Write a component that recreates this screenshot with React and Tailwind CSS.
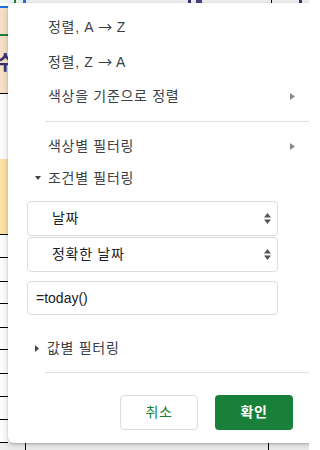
import React from 'react'

const font = { fontFamily: '"Liberation Sans", "Noto Sans CJK KR", sans-serif' }

function RightArrow() {
  return (
    <svg width="5" height="7" viewBox="0 0 5 7" className="shrink-0">
      <path d="M0 0 L5 3.5 L0 7 Z" fill="#8a8a8a" />
    </svg>
  )
}

function Caret({ open }) {
  return open ? (
    <svg width="6" height="4" viewBox="0 0 6 4" className="shrink-0">
      <path d="M0 0 L6 0 L3 4 Z" fill="#444" />
    </svg>
  ) : (
    <svg width="4" height="7" viewBox="0 0 4 7" className="shrink-0">
      <path d="M0 0 L4 3.5 L0 7 Z" fill="#444" />
    </svg>
  )
}

function UpDown() {
  return (
    <svg width="7" height="11" viewBox="0 0 7 11" className="shrink-0">
      <path d="M0 4.5 L3.5 0 L7 4.5 Z" fill="#555" />
      <path d="M0 6.5 L7 6.5 L3.5 11 Z" fill="#555" />
    </svg>
  )
}

function MenuItem({ label, arrow }) {
  return (
    <div className="h-[35px] flex items-center pl-[40px] pr-[13px] text-[14px] tracking-[0.7px] text-[#3c4043]">
      <span className="flex-1">{label}</span>
      {arrow && <RightArrow />}
    </div>
  )
}

function SortLabel({ from, to }) {
  return (
    <>
      정렬, {from} <span className="font-['Noto_Sans_CJK_KR',sans-serif] tracking-normal">→</span> {to}
    </>
  )
}

function SelectBox({ label, className = '' }) {
  return (
    <div className={`h-[35px] w-[251px] ml-[19px] flex items-center pl-[24px] pr-[6px] border border-[#dadce0] rounded-[4px] text-[14px] tracking-[0.7px] text-[#202124] ${className}`}>
      <span className="flex-1">{label}</span>
      <UpDown />
    </div>
  )
}

export default function App() {
  const rowLines = [234, 257, 281, 303, 327, 349, 373, 396, 419, 442]
  return (
    <div className="relative w-[309px] h-[450px] overflow-hidden bg-white" style={font}>
      {/* sheet behind the menu */}
      <div className="absolute inset-0">
        <div className="absolute left-0 top-0 w-full h-[3px] bg-[#f1f3f4]" />
        <div className="absolute left-[14px] top-0 w-[2px] h-[3px] bg-[#188038]" />
        <div className="absolute left-[23px] top-0 w-[3px] h-[3px] bg-[#1a73e8]" />
        <div className="absolute left-[188px] top-0 w-[3px] h-[3px] bg-[#3c2f6b]" />
        <div className="absolute left-[196px] top-0 w-[6px] h-[3px] bg-[#4b3f7a]" />
        <div className="absolute left-[271px] top-0 w-px h-[3px] bg-black" />
        <div className="absolute left-[299px] top-0 w-[3px] h-[3px] bg-[#3c2f6b]" />

        <div className="absolute left-0 top-[6px] w-[8px] h-[2px] bg-[#1a73e8]" />
        <div className="absolute left-0 top-[8px] w-[8px] h-[85px] bg-[#f9e1c9]" />
        <div className="absolute left-0 top-[34px] w-[8px] h-[2px] bg-[#188038]" />
        <div className="absolute left-0 top-[52px] w-[8px] h-[22px] overflow-hidden">
          <div className="ml-[-4px] text-[20px] leading-[22px] text-[#3a2f6b] font-bold">수</div>
        </div>
        <div className="absolute left-0 top-[93px] w-[8px] h-px bg-black" />
        <div className="absolute left-0 top-[159px] w-[8px] h-[75px] bg-[#fde4a5]" />
        {rowLines.map(y => (
          <div key={y} className="absolute left-0 w-[8px] h-px bg-black" style={{ top: y }} />
        ))}

        <div className="absolute left-0 top-[443px] w-full h-[7px] bg-[#eeeeee]" />
        <div className="absolute left-[25px] top-[443px] w-px h-[7px] bg-black" />
        <div className="absolute left-[268px] top-[443px] w-px h-[7px] bg-black" />
      </div>

      {/* filter menu */}
      <div className="absolute left-[8px] top-[3px] w-[320px] h-[440px] bg-white rounded-[6px] shadow-[0_2px_6px_2px_rgba(60,64,67,0.15),0_1px_2px_rgba(60,64,67,0.3)] pt-[6px] flex flex-col">
        <MenuItem label={<SortLabel from="A" to="Z" />} />
        <MenuItem label={<SortLabel from="Z" to="A" />} />
        <div className="w-[300px]">
          <MenuItem label="색상을 기준으로 정렬" arrow />
        </div>
        <div className="ml-[37px] mt-[7px] mb-[7px] h-px bg-[#e0e0e0]" />
        <div className="w-[300px]">
          <MenuItem label="색상별 필터링" arrow />
        </div>

        <div className="h-[28px] flex items-center gap-[7px] pl-[27px] text-[14px] tracking-[0.7px] text-[#3c4043]">
          <Caret open />
          <span>조건별 필터링</span>
        </div>

        <SelectBox label="날짜" className="mt-[9px]" />
        <SelectBox label="정확한 날짜" className="mt-px" />

        <div className="mt-[9px] h-[34px] w-[251px] ml-[19px] flex items-center pl-[8px] border border-[#dadce0] rounded-[4px] text-[14px] text-[#202124]">
          =today()
        </div>

        <div className="mt-[19px] h-[28px] flex items-center gap-[8px] pl-[27px] text-[14px] tracking-[0.7px] text-[#3c4043]">
          <Caret />
          <span>값별 필터링</span>
        </div>

        <div className="ml-[37px] mt-[10px] h-px bg-[#e0e0e0]" />

        <div className="mt-[22px] flex gap-[17px] pl-[112px]">
          <button className="h-[35px] w-[78px] rounded-[4px] border border-[#dadce0] bg-white text-[14px] tracking-[0.7px] text-[#188038]">
            취소
          </button>
          <button className="h-[35px] w-[78px] rounded-[4px] bg-[#188038] text-[14px] tracking-[0.7px] font-bold text-white">
            확인
          </button>
        </div>
      </div>
    </div>
  )
}
